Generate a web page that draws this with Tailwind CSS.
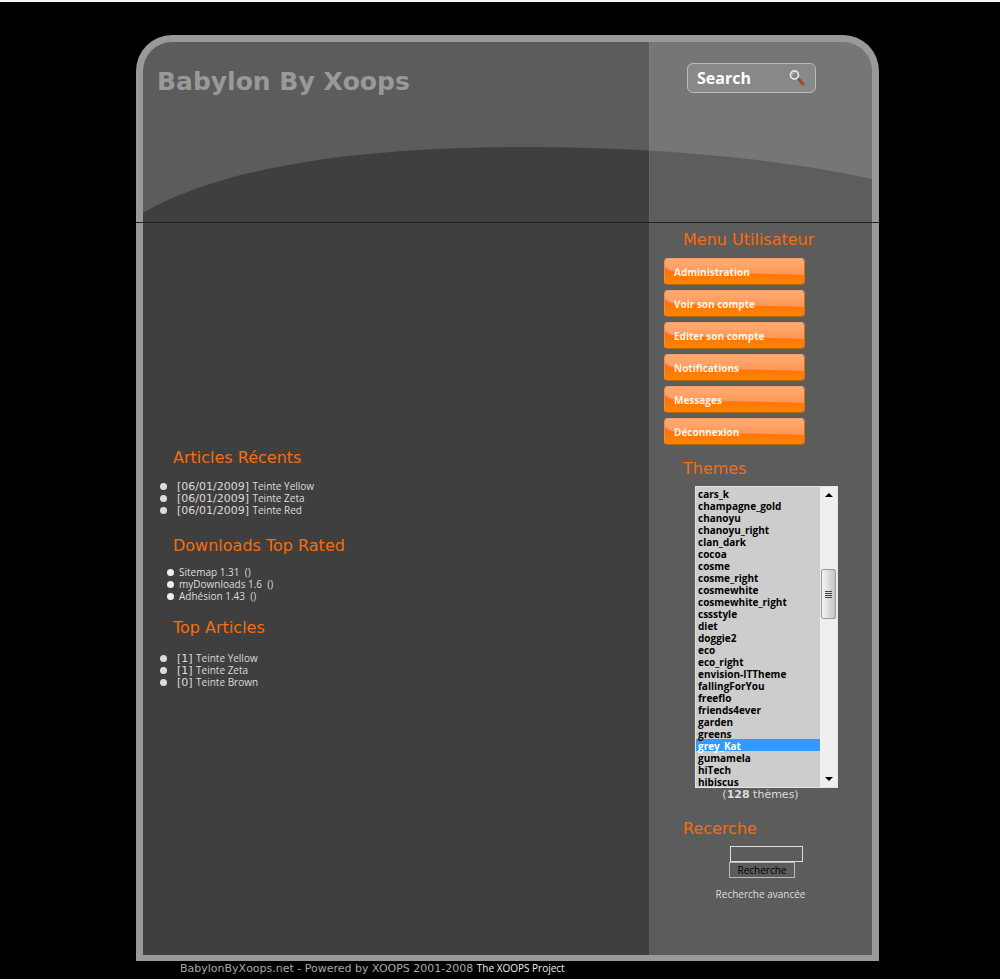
<!DOCTYPE html>
<html lang="fr">
<head>
<meta charset="utf-8">
<meta name="viewport" content="width=device-width, initial-scale=1">
<title>Babylon By Xoops</title>
<script src="https://cdn.jsdelivr.net/npm/@tailwindcss/browser@4"></script>
</head>
<body class="border-t-2 border-[#f4f4f4] bg-black pt-[33px] pl-[15px] font-['DejaVu_Sans',sans-serif] text-[11px] leading-3 text-[#dcdcdc]">
<svg class="absolute size-0" aria-hidden="true">
  <linearGradient id="shine" x1="0" y1="0" x2="0" y2="1"><stop offset="0" stop-color="#ffac78"/><stop offset="1" stop-color="#ff9552"/></linearGradient>
  <symbol id="gloss" viewBox="0 0 139 25" preserveAspectRatio="none"><path d="M0 0H139V16C100 14 50 15 12 13Q3 12 0 8Z" fill="url(#shine)"/></symbol>
</svg>
<div class="mx-auto max-w-[743px]">
  <header class="border-b border-[#222]">
    <div class="relative flex h-[187px] overflow-hidden rounded-t-[36px] border-x-7 border-t-7 border-[#999] bg-[#5c5c5c]">
      <svg class="absolute inset-0 h-full w-full" viewBox="0 0 729 180" preserveAspectRatio="none" aria-hidden="true">
        <path d="M0 171C72 128 205 105 382 105C510 105 640 117 729 137V180H0Z" fill="#3f3f3f"/>
      </svg>
      <h1 class="relative min-w-0 flex-1 pt-6 pl-[14px] text-[25px] leading-8 font-bold text-[#999]">Babylon By Xoops</h1>
      <div class="relative w-[223px] border-l border-white/5 bg-white/16 pt-[21px] pl-[37px]">
        <form class="flex h-[30px] w-[129px] items-center rounded-md border border-[#bbb] bg-[#888] pr-[10px] pl-[9px]">
          <input type="text" aria-label="Search" placeholder="Search" class="h-full min-w-0 flex-1 bg-transparent font-['Open_Sans',sans-serif] text-[16px] font-bold text-white outline-none placeholder:text-white placeholder:opacity-100">
          <button type="button" aria-label="Search" class="h-4 w-4">
            <svg viewBox="0 0 16 16" class="h-4 w-4" fill="none"><path d="M8.500 8L11 10.500" stroke="#5a4a42" stroke-width="2"/><path d="M10.500 10L14 14" stroke="#a04a20" stroke-width="3" stroke-linecap="round"/><circle cx="5.500" cy="5" r="4" fill="#858585" stroke="#e2e2dc" stroke-width="1.800"/><path d="M3.500 5a2 2 0 0 1 2-2" stroke="#bbb"/></svg>
          </button>
        </form>
      </div>
    </div>
  </header>
  <div class="flex min-h-[738px] border-x-7 border-b-6 border-[#999] bg-[#3f3f3f]">
    <main class="min-w-0 flex-1 pt-[225px]">
      <h2 class="pl-[30px] text-[16px] leading-5 text-[#f86c0c]">Articles Récents</h2>
      <ul class="mt-3 pl-[17px]">
        <li class="flex h-3 items-center gap-[10px]"><span class="size-[7px] rounded-full bg-[#dcdcdc]"></span><span>[06/01/2009] <a href="#" class="font-['Open_Sans',sans-serif] text-[10px] leading-3">Teinte Yellow</a></span></li>
        <li class="flex h-3 items-center gap-[10px]"><span class="size-[7px] rounded-full bg-[#dcdcdc]"></span><span>[06/01/2009] <a href="#" class="font-['Open_Sans',sans-serif] text-[10px] leading-3">Teinte Zeta</a></span></li>
        <li class="flex h-3 items-center gap-[10px]"><span class="size-[7px] rounded-full bg-[#dcdcdc]"></span><span>[06/01/2009] <a href="#" class="font-['Open_Sans',sans-serif] text-[10px] leading-3">Teinte Red</a></span></li>
      </ul>
      <h2 class="mt-5 pl-[30px] text-[16px] leading-5 text-[#f86c0c]">Downloads Top Rated</h2>
      <ul class="mt-[10px] pl-6 font-['Open_Sans',sans-serif] text-[10px] leading-3">
        <li class="flex h-3 items-center gap-[5px]"><span class="size-[7px] rounded-full bg-[#eee]"></span><a href="#">Sitemap 1.31 &nbsp;()</a></li>
        <li class="flex h-3 items-center gap-[5px]"><span class="size-[7px] rounded-full bg-[#eee]"></span><a href="#">myDownloads 1.6 &nbsp;()</a></li>
        <li class="flex h-3 items-center gap-[5px]"><span class="size-[7px] rounded-full bg-[#eee]"></span><a href="#">Adhésion 1.43 &nbsp;()</a></li>
      </ul>
      <h2 class="mt-4 pl-[30px] text-[16px] leading-5 text-[#f86c0c]">Top Articles</h2>
      <ul class="mt-[14px] pl-[17px]">
        <li class="flex h-3 items-center gap-[10px]"><span class="size-[7px] rounded-full bg-[#dcdcdc]"></span><span>[1] <a href="#" class="font-['Open_Sans',sans-serif] text-[10px] leading-3">Teinte Yellow</a></span></li>
        <li class="flex h-3 items-center gap-[10px]"><span class="size-[7px] rounded-full bg-[#dcdcdc]"></span><span>[1] <a href="#" class="font-['Open_Sans',sans-serif] text-[10px] leading-3">Teinte Zeta</a></span></li>
        <li class="flex h-3 items-center gap-[10px]"><span class="size-[7px] rounded-full bg-[#dcdcdc]"></span><span>[0] <a href="#" class="font-['Open_Sans',sans-serif] text-[10px] leading-3">Teinte Brown</a></span></li>
      </ul>
    </main>
    <aside class="w-[223px] bg-[#5c5c5c] pt-[7px]">
      <h2 class="pl-[34px] text-[16px] leading-5 text-[#f86c0c]">Menu Utilisateur</h2>
      <nav class="mt-2 flex w-[156px] flex-col gap-[5px] pl-[15px] font-['Open_Sans',sans-serif] text-[10px] font-bold text-[#fff4e4]">
        <a href="#" class="relative flex h-[27px] items-center overflow-hidden rounded-[4px] border border-t-[#ff9c60] border-r-[#d8701c] border-b-[#b8660f] border-l-[#ff8a35] bg-linear-to-b from-[#ff6a10] from-30% to-[#ff8400] pl-[9px]"><svg class="absolute inset-0 h-full w-full" aria-hidden="true"><use href="#gloss"/></svg><span class="relative">Administration</span></a>
        <a href="#" class="relative flex h-[27px] items-center overflow-hidden rounded-[4px] border border-t-[#ff9c60] border-r-[#d8701c] border-b-[#b8660f] border-l-[#ff8a35] bg-linear-to-b from-[#ff6a10] from-30% to-[#ff8400] pl-[9px]"><svg class="absolute inset-0 h-full w-full" aria-hidden="true"><use href="#gloss"/></svg><span class="relative">Voir son compte</span></a>
        <a href="#" class="relative flex h-[27px] items-center overflow-hidden rounded-[4px] border border-t-[#ff9c60] border-r-[#d8701c] border-b-[#b8660f] border-l-[#ff8a35] bg-linear-to-b from-[#ff6a10] from-30% to-[#ff8400] pl-[9px]"><svg class="absolute inset-0 h-full w-full" aria-hidden="true"><use href="#gloss"/></svg><span class="relative">Editer son compte</span></a>
        <a href="#" class="relative flex h-[27px] items-center overflow-hidden rounded-[4px] border border-t-[#ff9c60] border-r-[#d8701c] border-b-[#b8660f] border-l-[#ff8a35] bg-linear-to-b from-[#ff6a10] from-30% to-[#ff8400] pl-[9px]"><svg class="absolute inset-0 h-full w-full" aria-hidden="true"><use href="#gloss"/></svg><span class="relative">Notifications</span></a>
        <a href="#" class="relative flex h-[27px] items-center overflow-hidden rounded-[4px] border border-t-[#ff9c60] border-r-[#d8701c] border-b-[#b8660f] border-l-[#ff8a35] bg-linear-to-b from-[#ff6a10] from-30% to-[#ff8400] pl-[9px]"><svg class="absolute inset-0 h-full w-full" aria-hidden="true"><use href="#gloss"/></svg><span class="relative">Messages</span></a>
        <a href="#" class="relative flex h-[27px] items-center overflow-hidden rounded-[4px] border border-t-[#ff9c60] border-r-[#d8701c] border-b-[#b8660f] border-l-[#ff8a35] bg-linear-to-b from-[#ff6a10] from-30% to-[#ff8400] pl-[9px]"><svg class="absolute inset-0 h-full w-full" aria-hidden="true"><use href="#gloss"/></svg><span class="relative">Déconnexion</span></a>
      </nav>
      <h2 class="mt-[14px] pl-[34px] text-[16px] leading-5 text-[#f86c0c]">Themes</h2>
      <div class="mt-[7px] ml-[46px] flex h-[302px] w-[143px] border border-[#e4e4e4] bg-[#cdcdcd]">
        <select size="25" aria-label="Themes" class="h-[300px] min-w-0 flex-1 overflow-hidden rounded-none bg-[#cdcdcd] p-0 font-['Open_Sans',sans-serif] text-[10px] leading-3 text-black outline-none *:h-3 *:min-h-0 *:px-[2px] *:py-0 *:leading-3 *:font-bold *:checked:bg-[#3399ff] *:checked:bg-linear-to-b *:checked:from-[#3399ff] *:checked:to-[#3399ff] *:checked:[-webkit-text-fill-color:white]">
          <option>cars_k</option><option>champagne_gold</option><option>chanoyu</option><option>chanoyu_right</option><option>clan_dark</option><option>cocoa</option><option>cosme</option><option>cosme_right</option><option>cosmewhite</option><option>cosmewhite_right</option><option>cssstyle</option><option>diet</option><option>doggie2</option><option>eco</option><option>eco_right</option><option>envision-ITTheme</option><option>fallingForYou</option><option>freeflo</option><option>friends4ever</option><option>garden</option><option>greens</option><option selected>grey_Kat</option><option>gumamela</option><option>hiTech</option><option>hibiscus</option>
        </select>
        <div class="flex w-[17px] flex-col items-center bg-[#efefef]" aria-hidden="true">
          <svg class="mt-[5px] h-[6px] w-[8px]" viewBox="0 0 8 6"><path d="M0 5L4 1L8 5Z" fill="#000"/></svg>
          <div class="mt-[71px] flex h-[50px] w-[15px] flex-col items-center justify-center gap-px rounded-[2px] border border-[#999] bg-linear-to-r from-[#f6f6f6] to-[#c4c4c4]">
            <i class="h-px w-[7px] bg-[#444]"></i><i class="h-px w-[7px] bg-[#444]"></i><i class="h-px w-[7px] bg-[#444]"></i><i class="h-px w-[7px] bg-[#444]"></i>
          </div>
          <svg class="mt-auto mb-[5px] h-[6px] w-[8px]" viewBox="0 0 8 6"><path d="M0 1L4 5L8 1Z" fill="#000"/></svg>
        </div>
      </div>
      <p class="mt-px text-center">(<b>128</b> thèmes)</p>
      <h2 class="mt-[18px] pl-[34px] text-[16px] leading-5 text-[#f86c0c]">Recerche</h2>
      <form class="mt-[7px] flex flex-col items-start pl-20">
        <input type="text" aria-label="Recherche" class="ml-px h-4 w-[73px] border border-[#ddd] bg-transparent px-1">
        <button type="button" class="h-4 w-[66px] border border-[#bbb] font-['Open_Sans',sans-serif] text-[10px] leading-3 text-black">Recherche</button>
      </form>
      <p class="mt-[10px] text-center font-['Open_Sans',sans-serif] text-[10px] leading-3"><a href="#">Recherche avancée</a></p>
    </aside>
  </div>
  <footer class="pt-px pl-11 text-[11px] leading-3 text-[#a8a8a8]">BabylonByXoops.net - Powered by XOOPS 2001-2008 <a href="#" class="font-['Open_Sans',sans-serif] text-[10px] leading-3 text-[#eee]">The XOOPS Project</a></footer>
</div>
</body>
</html>
